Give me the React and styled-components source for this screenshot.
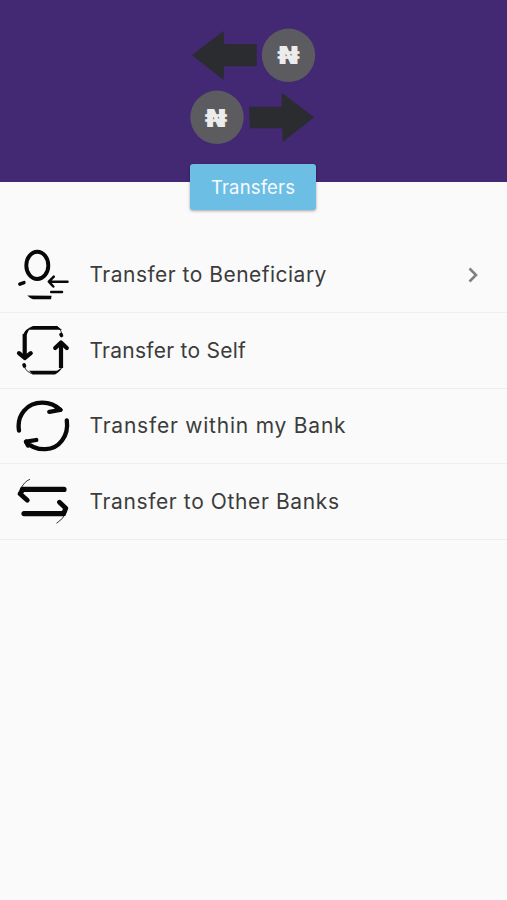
import styled, { createGlobalStyle } from 'styled-components'

const GlobalStyle = createGlobalStyle`
  * {
    box-sizing: border-box;
  }

  body {
    margin: 0;
    background: #fafafa;
    font-family: Inter, 'Liberation Sans', sans-serif;
  }
`

const Page = styled.div`
  display: flex;
  flex-direction: column;
  min-height: 100vh;
  background: #fafafa;
`

const Header = styled.header`
  display: flex;
  justify-content: center;
  height: 181.5px;
  padding: 28px 2px 0 0;
  background: #432874;
`

const HeaderArt = styled.svg`
  width: 126px;
  height: 118px;
`

const Naira = styled.text`
  font-family: 'DejaVu Sans', sans-serif;
  font-size: 24px;
  font-weight: 700;
  fill: #ececec;
  text-anchor: middle;
`

const TitleButton = styled.button`
  align-self: center;
  width: 126px;
  height: 46.5px;
  margin: -18px 1px 0 0;
  padding: 0;
  border: 0;
  border-radius: 3px;
  background: #6cbee4;
  box-shadow: 0 1px 3px rgba(0, 0, 0, 0.35);
  color: #f6fbfe;
  font-family: inherit;
  font-size: 18.5px;
  letter-spacing: ${({ $spacing }) => $spacing}px;
  white-space: nowrap;
`

const List = styled.ul`
  margin: 27.5px 0 0;
  padding: 0;
  list-style: none;
`

const Row = styled.li`
  display: flex;
  align-items: center;
  height: 75.5px;
  padding: 0 24px 0 15px;
  border-bottom: 1px solid #eeeeee;
`

const RowIcon = styled.svg`
  flex: none;
  width: 56px;
  height: 56px;
  margin-right: 18.5px;
  fill: none;
  stroke: #080808;
  stroke-linecap: round;
  stroke-linejoin: round;
`

const Label = styled.span`
  flex: 1;
  padding-top: 1px;
  color: #3c3c3c;
  font-size: 21px;
  line-height: 28px;
  letter-spacing: ${({ $spacing }) => $spacing}px;
  white-space: nowrap;
`

const Chevron = styled.svg`
  width: 20px;
  height: 20px;
  fill: none;
  stroke: #808080;
  stroke-width: 2.6;
`

const BeneficiaryIcon = () => (
  <RowIcon viewBox='0 0 56 56'>
    <ellipse cx='22.3' cy='18.4' rx='11' ry='13.6' strokeWidth='3.9' />
    <path d='M4.8 37.2L9 35.6' strokeWidth='3.4' />
    <path d='M12.3 48.5L36.6 48.7L36 52.2H18Q14.5 51 12.3 48.5Z' fill='#080808' stroke='none' />
    <path d='M34 34.7H52.5M38.8 29.7L33.8 34.7L38.3 39.5' strokeWidth='2.5' />
    <path d='M36.2 45H47' strokeWidth='2.5' />
  </RowIcon>
)

const SelfIcon = () => (
  <RowIcon viewBox='0 0 56 56'>
    <path d='M9.7 34V12M46 22V46' strokeWidth='4.2' strokeLinecap='butt' />
    <path d='M4 31.2L9.7 36L15.8 31.2M40.2 26L46 20.5L51.8 26' strokeWidth='4.2' />
    <path
      d='M8 13Q10 7 18 4H42L47 8L43 7.8H14L11.5 13ZM11 46L14 48.8H42L47.5 45Q45 50 40 52.5H18Z'
      fill='#080808'
      stroke='none'
    />
    <path d='M42 4.5Q46.5 7.5 47 13M9 43Q10 50 18 52' strokeWidth='0.8' />
    <path d='M46 12.5L46.5 13.5M9 42.8L9.5 44' strokeWidth='3.6' />
  </RowIcon>
)

const BankIcon = () => (
  <RowIcon viewBox='0 0 56 56' strokeWidth='4.3'>
    <path d='M4 32.6C1.5 17 12 4.7 27.3 4.7C35 4.7 41 7.5 45.3 12L34.3 13.8' />
    <path d='M41 9L45.5 11.8' />
    <path d='M51.8 22.3C54 38 44 51 30.5 51.2C22.5 51.5 15.5 48.5 11 43.7L21.3 42' />
    <path d='M11 43.7L13 47.5' />
  </RowIcon>
)

const OtherBanksIcon = () => (
  <RowIcon viewBox='0 0 56 56' strokeWidth='5.2'>
    <path d='M7.5 16.4H49' />
    <path d='M8 16.4L5 20.8L12.3 27.2' strokeWidth='4.8' />
    <path d='M9 40.6H48.5' />
    <path d='M48.5 40.6L50.8 35.2L44.5 29.2' strokeWidth='4.8' />
    <path d='M14.6 6.4Q9 8.5 5 17M51.5 39Q48 46.5 41.8 50.2' strokeWidth='0.8' />
  </RowIcon>
)

const items = [
  { label: 'Transfer to Beneficiary', spacing: 0.48, icon: BeneficiaryIcon, chevron: true },
  { label: 'Transfer to Self', spacing: 0.25, icon: SelfIcon },
  { label: 'Transfer within my Bank', spacing: 0.78, icon: BankIcon },
  { label: 'Transfer to Other Banks', spacing: 0.62, icon: OtherBanksIcon },
]

const App = () => {
  return (
    <Page>
      <GlobalStyle />
      <Header>
        <HeaderArt viewBox='0 0 126 118'>
          <path
            d='M2 27.3L33.5 3L34.2 16H66.7V38.2H34L33.7 52ZM59 78.7H91.7V64.7L124 89.3L92.7 114L92.3 100.2H60Z'
            fill='#2b2c30'
          />
          <circle cx='98.5' cy='27.3' r='26.7' fill='#5b5b60' />
          <circle cx='27' cy='89.3' r='26.7' fill='#5b5b60' />
          <Naira x='98.5' y='36' textLength='23' lengthAdjust='spacingAndGlyphs'>₦</Naira>
          <Naira x='26' y='98.5' textLength='23' lengthAdjust='spacingAndGlyphs'>₦</Naira>
        </HeaderArt>
      </Header>
      <TitleButton $spacing={0.15}>Transfers</TitleButton>
      <List>
        {items.map(({ label, spacing, icon: Icon, chevron }) => (
          <Row key={label}>
            <Icon />
            <Label $spacing={spacing}>{label}</Label>
            {chevron && (
              <Chevron viewBox='0 0 20 20'>
                <path d='M6.5 3.5L13 10L6.5 16.5' />
              </Chevron>
            )}
          </Row>
        ))}
      </List>
    </Page>
  )
}

export default App
